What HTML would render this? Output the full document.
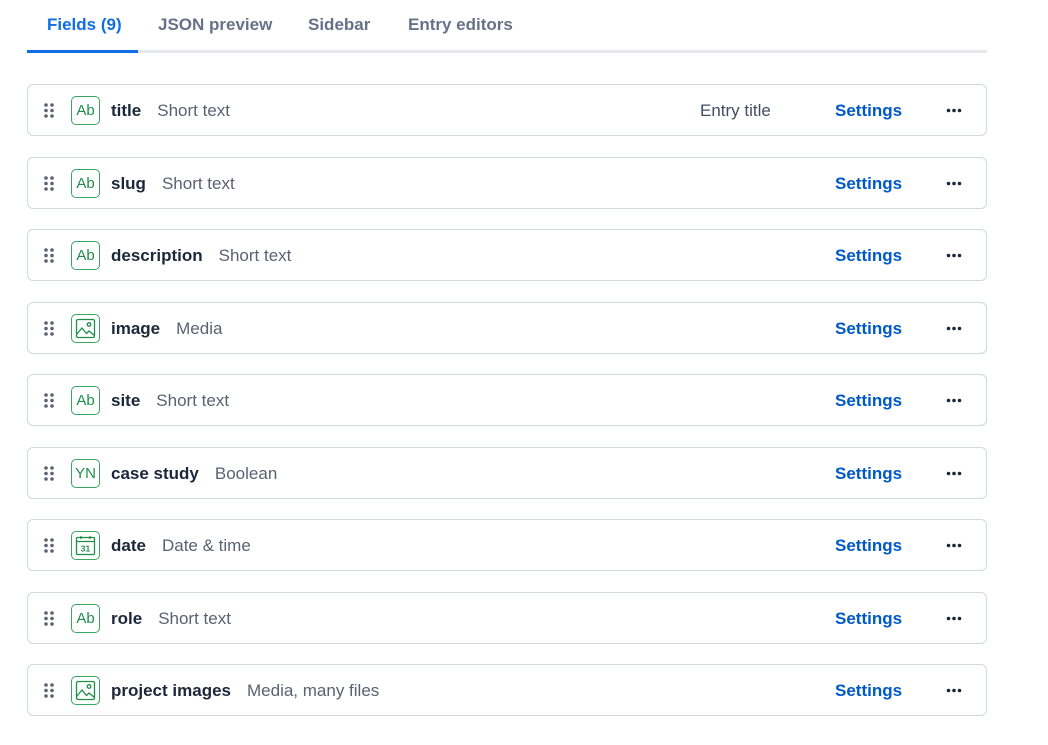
<!DOCTYPE html>
<html><head><meta charset="utf-8"><style>
body{margin:0;background:#fff;font-family:"Liberation Sans",sans-serif;width:1048px;height:745px;position:relative;overflow:hidden}
.tab{position:absolute;top:15px;font-size:17px;font-weight:bold;color:#67728a}
.row{position:absolute;left:27px;width:958px;height:50px;border:1px solid #cfd9e0;border-radius:6px;background:#fff}
.drag{position:absolute;left:16px;top:18px;width:10px;height:15px}
.ic{position:absolute;left:43px;top:11px;width:27px;height:27px;border:1.5px solid #3aa65f;border-radius:5px;color:#1f8f4a;font-size:15px;text-align:center;line-height:27px}
.nm{position:absolute;left:83px;top:16px;font-size:17px;font-weight:bold;color:#1b273a}
.ty{font-weight:normal;color:#5a6272;margin-left:16px}
.et{position:absolute;left:672px;top:16px;font-size:17px;color:#414d63}
.st{position:absolute;left:807px;top:16px;font-size:17px;font-weight:bold;color:#0059c8}
.mo{position:absolute;left:918px;top:23px;width:16px;height:5px}
</style></head><body>
<div class="tab" style="left:47px;color:#0f6ee6">Fields (9)</div>
<div class="tab" style="left:158px">JSON preview</div>
<div class="tab" style="left:308px">Sidebar</div>
<div class="tab" style="left:408px">Entry editors</div>
<div style="position:absolute;left:27px;top:50px;width:960px;height:3px;background:#e5e9ee"></div>
<div style="position:absolute;left:27px;top:50px;width:111px;height:3px;background:#0f6ee6"></div>

<svg width="0" height="0" style="position:absolute">
<defs>
<g id="dr" fill="#5a6272"><circle cx="2" cy="2" r="1.8"/><circle cx="8" cy="2" r="1.8"/><circle cx="2" cy="7.5" r="1.8"/><circle cx="8" cy="7.5" r="1.8"/><circle cx="2" cy="13" r="1.8"/><circle cx="8" cy="13" r="1.8"/></g>
<g id="mo" fill="#1b273a"><circle cx="2.5" cy="2.5" r="1.8"/><circle cx="8" cy="2.5" r="1.8"/><circle cx="13.5" cy="2.5" r="1.8"/></g>
<g id="img" fill="none" stroke="#1f8f4a" stroke-width="1.3"><rect x="4.5" y="4.5" width="18" height="18" rx="1.5"/><path d="M4.5 19.5l5.5-6.5 4.5 5.5 2.5-2.5 5.5 4.5"/><circle cx="17" cy="9.5" r="1.8"/></g>
</defs></svg>

<div class="row" style="top:84px"><svg class="drag"><use href="#dr"/></svg><div class="ic">Ab</div><div class="nm">title<span class="ty">Short text</span></div><div class="et">Entry title</div><div class="st">Settings</div><svg class="mo"><use href="#mo"/></svg></div>
<div class="row" style="top:157px"><svg class="drag"><use href="#dr"/></svg><div class="ic">Ab</div><div class="nm">slug<span class="ty">Short text</span></div><div class="st">Settings</div><svg class="mo"><use href="#mo"/></svg></div>
<div class="row" style="top:229px"><svg class="drag"><use href="#dr"/></svg><div class="ic">Ab</div><div class="nm">description<span class="ty">Short text</span></div><div class="st">Settings</div><svg class="mo"><use href="#mo"/></svg></div>
<div class="row" style="top:302px"><svg class="drag"><use href="#dr"/></svg><div class="ic"><svg width="27" height="27" viewBox="0 0 27 27"><use href="#img"/></svg></div><div class="nm">image<span class="ty">Media</span></div><div class="st">Settings</div><svg class="mo"><use href="#mo"/></svg></div>
<div class="row" style="top:374px"><svg class="drag"><use href="#dr"/></svg><div class="ic">Ab</div><div class="nm">site<span class="ty">Short text</span></div><div class="st">Settings</div><svg class="mo"><use href="#mo"/></svg></div>
<div class="row" style="top:447px"><svg class="drag"><use href="#dr"/></svg><div class="ic">YN</div><div class="nm">case study<span class="ty">Boolean</span></div><div class="st">Settings</div><svg class="mo"><use href="#mo"/></svg></div>
<div class="row" style="top:519px"><svg class="drag"><use href="#dr"/></svg><div class="ic"><svg width="27" height="27" viewBox="0 0 27 27" fill="none" stroke="#1f8f4a" stroke-width="1.3"><rect x="4.5" y="5.5" width="18" height="17" rx="1"/><path d="M4.5 9.5h18M9 4v3M18 4v3"/><text x="13.5" y="19.5" font-size="8.5" font-weight="bold" text-anchor="middle" fill="#1f8f4a" stroke="none" font-family="Liberation Sans">31</text></svg></div><div class="nm">date<span class="ty">Date &amp; time</span></div><div class="st">Settings</div><svg class="mo"><use href="#mo"/></svg></div>
<div class="row" style="top:592px"><svg class="drag"><use href="#dr"/></svg><div class="ic">Ab</div><div class="nm">role<span class="ty">Short text</span></div><div class="st">Settings</div><svg class="mo"><use href="#mo"/></svg></div>
<div class="row" style="top:664px"><svg class="drag"><use href="#dr"/></svg><div class="ic"><svg width="27" height="27" viewBox="0 0 27 27"><use href="#img"/></svg></div><div class="nm">project images<span class="ty">Media, many files</span></div><div class="st">Settings</div><svg class="mo"><use href="#mo"/></svg></div>
</body></html>
